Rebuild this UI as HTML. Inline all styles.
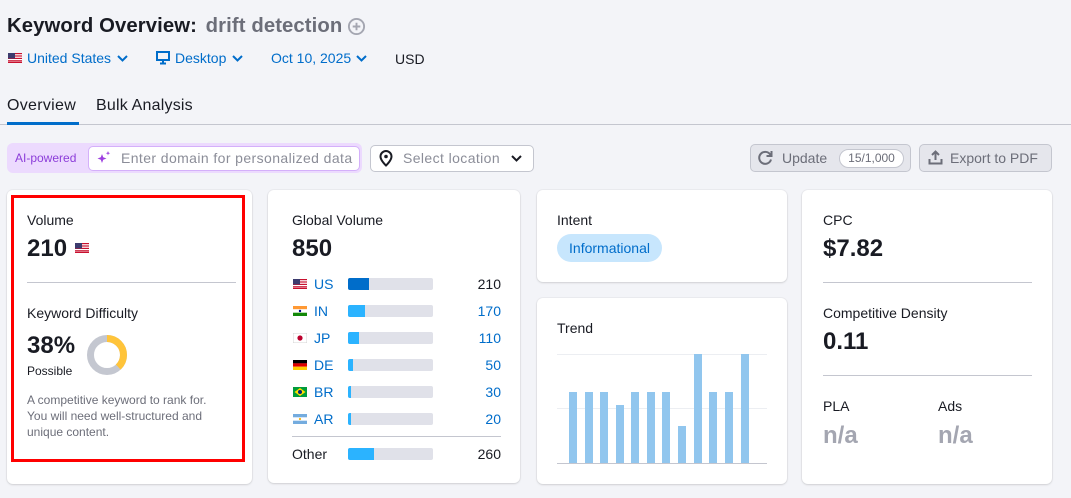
<!DOCTYPE html>
<html><head><meta charset="utf-8">
<style>
*{box-sizing:border-box;margin:0;padding:0}
body{width:1071px;height:498px;background:#f3f4f8;font-family:"Liberation Sans",sans-serif;color:#191b23;position:relative;overflow:hidden}
.a{position:absolute;white-space:nowrap}
.card{position:absolute;background:#fff;border-radius:6px;box-shadow:0 1px 2px rgba(0,0,0,.12),0 0 0 1px rgba(0,0,0,.03)}
.lbl{font-size:14px;color:#191b23}
.big{font-size:24px;font-weight:bold}
.blue{color:#006dca}
.bar{position:absolute;height:12px;width:85px;background:#e0e1e9;border-radius:2px;overflow:hidden}
.bar i{position:absolute;left:0;top:0;bottom:0;background:#2bb3ff}
.tb{position:absolute;width:8px;background:#91c6ee;bottom:35px}
.flag{position:absolute;width:14px;height:10px}
.cty{font-size:14px;color:#006dca}
.num{font-size:14px;text-align:right;width:60px}
</style></head><body>

<div class="a" style="left:7px;top:15px;font-size:20.3px;font-weight:bold;letter-spacing:.1px">Keyword Overview: <span style="color:#6c6e79;margin-left:3px">drift detection</span></div>
<svg class="a" style="left:347px;top:17px" width="19" height="19" viewBox="0 0 20 20"><circle cx="10" cy="10" r="8" fill="none" stroke="#a4a6b1" stroke-width="2"/><path d="M10 6v8M6 10h8" stroke="#a4a6b1" stroke-width="2"/></svg>

<svg class="a" style="left:8px;top:53px" width="14" height="10" viewBox="0 0 14 10"><rect width="14" height="10" fill="#fff"/><g fill="#c8102e"><rect y="0" width="14" height="1.2"/><rect y="2.4" width="14" height="1.2"/><rect y="4.8" width="14" height="1.2"/><rect y="7.2" width="14" height="1.2"/><rect y="8.8" width="14" height="1.2"/></g><rect width="7" height="5.5" fill="#3c3b6e"/></svg>
<div class="a blue" style="left:27px;top:50px;font-size:14px">United States</div>
<svg class="a" style="left:117px;top:55px" width="11" height="7"><path d="M1 1l4.5 4.5L10 1" fill="none" stroke="#006dca" stroke-width="2"/></svg>
<svg class="a" style="left:156px;top:51px" width="14" height="14" viewBox="0 0 14 14"><rect x="1" y="1" width="12" height="8" fill="none" stroke="#006dca" stroke-width="2"/><path d="M7 9v3M4 12.5h6" stroke="#006dca" stroke-width="2"/></svg>
<div class="a blue" style="left:175px;top:50px;font-size:14px">Desktop</div>
<svg class="a" style="left:232px;top:55px" width="11" height="7"><path d="M1 1l4.5 4.5L10 1" fill="none" stroke="#006dca" stroke-width="2"/></svg>
<div class="a blue" style="left:271px;top:50px;font-size:14px">Oct 10, 2025</div>
<svg class="a" style="left:356px;top:55px" width="11" height="7"><path d="M1 1l4.5 4.5L10 1" fill="none" stroke="#006dca" stroke-width="2"/></svg>
<div class="a" style="left:395px;top:51px;font-size:14px">USD</div>

<div class="a" style="left:7px;top:97px;font-size:16px;letter-spacing:.3px">Overview</div>
<div class="a" style="left:96px;top:97px;font-size:16px;letter-spacing:.2px">Bulk Analysis</div>
<div class="a" style="left:0;top:124px;width:1071px;height:1px;background:#c4c6cf"></div>
<div class="a" style="left:7px;top:122px;width:72px;height:3px;background:#006dca"></div>

<div class="a" style="left:7px;top:143px;width:355px;height:30px;background:#ecdafe;border-radius:6px"></div>
<div class="a" style="left:15px;top:151px;font-size:12px;color:#8c3dd9">AI-powered</div>
<div class="a" style="left:88px;top:146px;width:272px;height:25px;background:#fff;border:1px solid #d4b0fa;border-radius:5px"></div>
<svg class="a" style="left:97px;top:151px" width="14" height="14" viewBox="0 0 14 14"><path d="M5 3l1.2 3.3L9.5 7.5 6.2 8.7 5 12 3.8 8.7 0.5 7.5 3.8 6.3z" fill="#9d3fe0"/><path d="M11 0l.6 1.6L13.2 2.2 11.6 2.8 11 4.4 10.4 2.8 8.8 2.2 10.4 1.6z" fill="#9d3fe0"/></svg>
<div class="a" style="left:121px;top:150px;font-size:14px;letter-spacing:.4px;color:#8b8d98">Enter domain for personalized data</div>
<div class="a" style="left:370px;top:145px;width:164px;height:27px;background:#fff;border:1px solid #c4c6cf;border-radius:5px"></div>
<svg class="a" style="left:379px;top:150px" width="14" height="17" viewBox="0 0 14 17"><path d="M7 1a5.5 5.5 0 0 0-5.5 5.5C1.5 10.5 7 15.5 7 15.5s5.5-5 5.5-9A5.5 5.5 0 0 0 7 1z" fill="none" stroke="#191b23" stroke-width="2"/><circle cx="7" cy="6.5" r="1.8" fill="#191b23"/></svg>
<div class="a" style="left:403px;top:150px;font-size:14px;letter-spacing:.4px;color:#8b8d98">Select location</div>
<svg class="a" style="left:511px;top:155px" width="11" height="7"><path d="M1 1l4.5 4.5L10 1" fill="none" stroke="#191b23" stroke-width="2"/></svg>

<div class="a" style="left:750px;top:144px;width:161px;height:28px;background:#e5e6ec;border:1px solid #c4c6cf;border-radius:5px"></div>
<svg class="a" style="left:758px;top:150px" width="15" height="15" viewBox="0 0 15 15"><path d="M12.5 5A6 6 0 1 0 13 9.5" fill="none" stroke="#6c6e79" stroke-width="2"/><path d="M13.5 1v5h-5" fill="none" stroke="#6c6e79" stroke-width="2"/></svg>
<div class="a" style="left:782px;top:150px;font-size:14px;color:#6c6e79">Update</div>
<div class="a" style="left:839px;top:149px;width:65px;height:19px;background:#fff;border:1px solid #c4c6cf;border-radius:10px;font-size:12px;color:#6c6e79;text-align:center;line-height:17px">15/1,000</div>
<div class="a" style="left:919px;top:144px;width:133px;height:28px;background:#e5e6ec;border:1px solid #c4c6cf;border-radius:5px"></div>
<svg class="a" style="left:928px;top:150px" width="15" height="15" viewBox="0 0 15 15"><path d="M7.5 10V2M4 5l3.5-3.5L11 5M1.5 9v4.5h12V9" fill="none" stroke="#6c6e79" stroke-width="2"/></svg>
<div class="a" style="left:950px;top:150px;font-size:14px;color:#6c6e79">Export to PDF</div>

<!-- card1 -->
<div class="card" style="left:7px;top:190px;width:245px;height:294px"></div>
<div class="a" style="left:11px;top:195px;width:234px;height:267px;border:3px solid #f00"></div>
<div class="a lbl" style="left:27px;top:212px">Volume</div>
<div class="a big" style="left:27px;top:235px">210</div>
<svg class="a" style="left:75px;top:243px" width="14" height="10" viewBox="0 0 14 10"><rect width="14" height="10" fill="#fff"/><g fill="#c8102e"><rect width="14" height="1.2"/><rect y="2.4" width="14" height="1.2"/><rect y="4.8" width="14" height="1.2"/><rect y="7.2" width="14" height="1.2"/><rect y="8.8" width="14" height="1.2"/></g><rect width="7" height="5.5" fill="#3c3b6e"/></svg>
<div class="a" style="left:27px;top:282px;width:209px;height:1px;background:#c4c6cf"></div>
<div class="a lbl" style="left:27px;top:305px">Keyword Difficulty</div>
<div class="a big" style="left:27px;top:332px">38%</div>
<div class="a" style="left:27px;top:364px;font-size:12px;color:#191b23">Possible</div>
<svg class="a" style="left:86px;top:334px" width="42" height="42" viewBox="0 0 42 42"><circle cx="21" cy="21" r="16.5" fill="none" stroke="#c4c7d0" stroke-width="7"/><circle cx="21" cy="21" r="16.5" fill="none" stroke="#ffc43a" stroke-width="7" stroke-dasharray="39.4 104" transform="rotate(-90 21 21)"/></svg>
<div class="a" style="left:27px;top:392px;font-size:12px;line-height:16px;color:#6c6e79;white-space:normal;width:196px">A competitive keyword to rank for. You will need well-structured and unique content.</div>

<!-- card2 -->
<div class="card" style="left:268px;top:190px;width:252px;height:293px"></div>
<div class="a lbl" style="left:292px;top:212px">Global Volume</div>
<div class="a big" style="left:292px;top:235px">850</div>

<svg class="flag" style="left:293px;top:279px" viewBox="0 0 14 10"><rect width="14" height="10" fill="#fff"/><g fill="#c8102e"><rect width="14" height="1.2"/><rect y="2.4" width="14" height="1.2"/><rect y="4.8" width="14" height="1.2"/><rect y="7.2" width="14" height="1.2"/><rect y="8.8" width="14" height="1.2"/></g><rect width="7" height="5.5" fill="#3c3b6e"/></svg>
<div class="a cty" style="left:314px;top:276px">US</div>
<div class="bar" style="left:348px;top:278px"><i style="width:21px;background:#006dca"></i></div>
<div class="a num" style="left:441px;top:276px">210</div>

<svg class="flag" style="left:293px;top:306px" viewBox="0 0 14 10"><rect width="14" height="3.3" fill="#f93"/><rect y="3.3" width="14" height="3.4" fill="#fff"/><rect y="6.7" width="14" height="3.3" fill="#138808"/><circle cx="7" cy="5" r="1.2" fill="#008"/></svg>
<div class="a cty" style="left:314px;top:303px">IN</div>
<div class="bar" style="left:348px;top:305px"><i style="width:17px"></i></div>
<div class="a num blue" style="left:441px;top:303px">170</div>

<svg class="flag" style="left:293px;top:333px" viewBox="0 0 14 10"><rect width="14" height="10" fill="#fff" stroke="#ccc" stroke-width=".8"/><circle cx="7" cy="5" r="2.6" fill="#bc002d"/></svg>
<div class="a cty" style="left:314px;top:330px">JP</div>
<div class="bar" style="left:348px;top:332px"><i style="width:11px"></i></div>
<div class="a num blue" style="left:441px;top:330px">110</div>

<svg class="flag" style="left:293px;top:360px" viewBox="0 0 14 10"><rect width="14" height="3.4" fill="#000"/><rect y="3.3" width="14" height="3.4" fill="#d00"/><rect y="6.7" width="14" height="3.3" fill="#ffce00"/></svg>
<div class="a cty" style="left:314px;top:357px">DE</div>
<div class="bar" style="left:348px;top:359px"><i style="width:5px"></i></div>
<div class="a num blue" style="left:441px;top:357px">50</div>

<svg class="flag" style="left:293px;top:387px" viewBox="0 0 14 10"><rect width="14" height="10" fill="#009c3b"/><path d="M7 1l5.5 4L7 9 1.5 5z" fill="#ffdf00"/><circle cx="7" cy="5" r="2" fill="#002776"/></svg>
<div class="a cty" style="left:314px;top:384px">BR</div>
<div class="bar" style="left:348px;top:386px"><i style="width:3px"></i></div>
<div class="a num blue" style="left:441px;top:384px">30</div>

<svg class="flag" style="left:293px;top:414px" viewBox="0 0 14 10"><rect width="14" height="10" fill="#74acdf"/><rect y="3.3" width="14" height="3.4" fill="#fff"/><circle cx="7" cy="5" r="1.1" fill="#f6b40e"/></svg>
<div class="a cty" style="left:314px;top:411px">AR</div>
<div class="bar" style="left:348px;top:413px"><i style="width:3px"></i></div>
<div class="a num blue" style="left:441px;top:411px">20</div>

<div class="a" style="left:292px;top:436px;width:209px;height:1px;background:#c4c6cf"></div>
<div class="a lbl" style="left:292px;top:446px">Other</div>
<div class="bar" style="left:348px;top:448px"><i style="width:26px"></i></div>
<div class="a num" style="left:441px;top:446px">260</div>

<!-- intent -->
<div class="card" style="left:537px;top:190px;width:250px;height:92px"></div>
<div class="a lbl" style="left:557px;top:212px">Intent</div>
<div class="a" style="left:557px;top:234px;width:105px;height:28px;background:#c7e6fd;border-radius:14px;font-size:14px;color:#006dca;text-align:center;line-height:28px">Informational</div>

<!-- trend -->
<div class="card" style="left:537px;top:298px;width:250px;height:186px"></div>
<div class="a lbl" style="left:557px;top:320px">Trend</div>
<div class="a" style="left:557px;top:354px;width:210px;height:1px;background:#eceef2"></div>
<div class="a" style="left:557px;top:408px;width:210px;height:1px;background:#eceef2"></div>
<div class="a" style="left:557px;top:463px;width:210px;height:1px;background:#c4c6cf"></div>
<div class="tb" style="left:569px;height:71px"></div>
<div class="tb" style="left:585px;height:71px"></div>
<div class="tb" style="left:600px;height:71px"></div>
<div class="tb" style="left:616px;height:58px"></div>
<div class="tb" style="left:631px;height:71px"></div>
<div class="tb" style="left:647px;height:71px"></div>
<div class="tb" style="left:662px;height:71px"></div>
<div class="tb" style="left:678px;height:37px"></div>
<div class="tb" style="left:694px;height:109px"></div>
<div class="tb" style="left:709px;height:71px"></div>
<div class="tb" style="left:725px;height:71px"></div>
<div class="tb" style="left:741px;height:109px"></div>

<!-- cpc -->
<div class="card" style="left:802px;top:190px;width:250px;height:294px"></div>
<div class="a lbl" style="left:823px;top:212px">CPC</div>
<div class="a big" style="left:823px;top:235px">$7.82</div>
<div class="a" style="left:823px;top:282px;width:209px;height:1px;background:#c4c6cf"></div>
<div class="a lbl" style="left:823px;top:305px">Competitive Density</div>
<div class="a big" style="left:823px;top:328px">0.11</div>
<div class="a" style="left:823px;top:375px;width:209px;height:1px;background:#c4c6cf"></div>
<div class="a lbl" style="left:823px;top:398px">PLA</div>
<div class="a lbl" style="left:938px;top:398px">Ads</div>
<div class="a big" style="left:823px;top:422px;color:#a4a6b1">n/a</div>
<div class="a big" style="left:938px;top:422px;color:#a4a6b1">n/a</div>

</body></html>
